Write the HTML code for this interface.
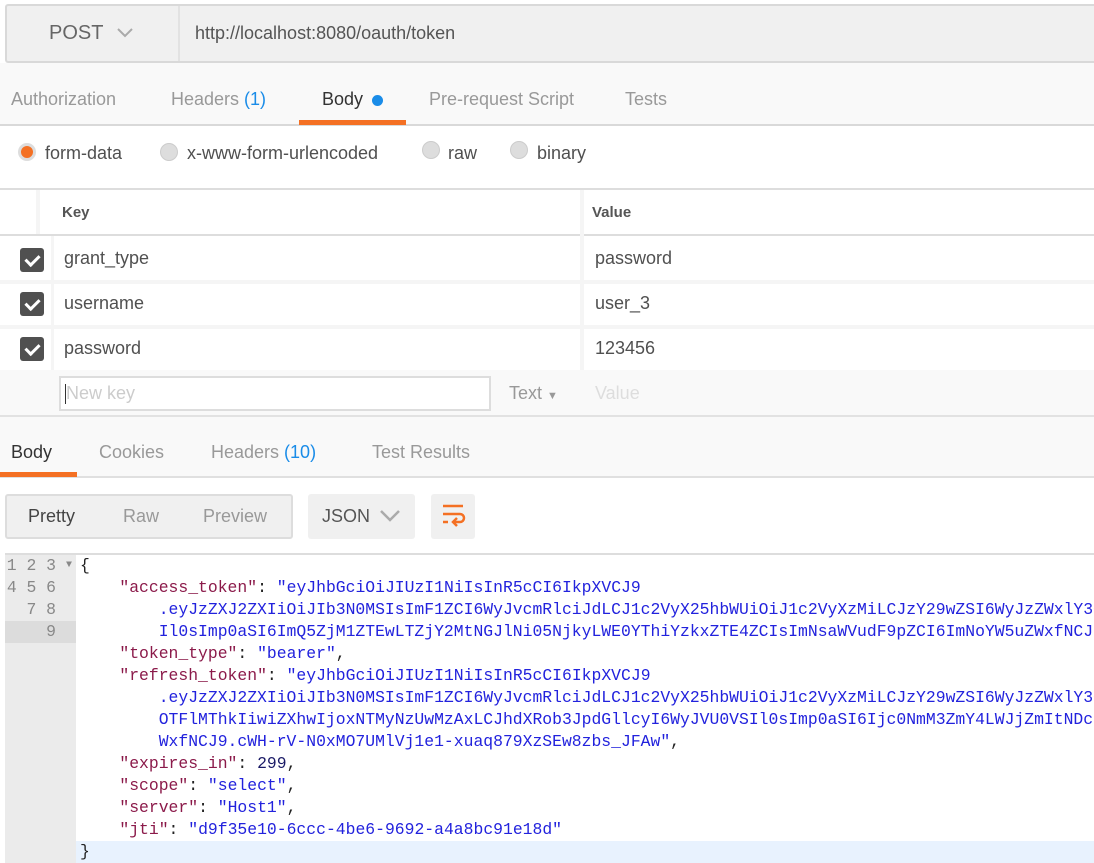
<!DOCTYPE html>
<html><head><meta charset="utf-8"><style>
*{box-sizing:border-box;margin:0;padding:0}
body{width:1094px;height:863px;overflow:hidden;background:#fff;font-family:"Liberation Sans",sans-serif;position:relative;color:#505050}
.a{position:absolute}
.t{font-size:18px;white-space:nowrap}
.g{color:#999}
.b{color:#1a8ce8}
.cb{position:absolute;left:20px;width:24px;height:24px;background:#505050;border-radius:3px}
.cb:after{content:"";position:absolute;left:8px;top:4px;width:6px;height:11px;border:solid #fff;border-width:0 3px 3px 0;transform:rotate(45deg)}
.radio{position:absolute;width:18px;height:18px;border-radius:50%;background:#ddd;border:1px solid #ccc}
.code{position:absolute;left:76px;top:555px;right:0;bottom:0;font-family:"Liberation Mono",monospace;font-size:16.4px;line-height:22px;white-space:pre;overflow:hidden;padding-left:4px}
.ln{position:absolute;left:5px;top:555px;width:71px;bottom:0;background:#ebebeb;font-family:"Liberation Mono",monospace;font-size:16.4px;line-height:22px;color:#888;text-align:right;padding-right:20px}
.k{color:#8b1a4a}.s{color:#2222dd}.n{color:#1a1a66}.p{color:#222}
</style></head><body>
<!-- URL bar -->
<div class="a" style="left:5px;top:4px;right:0;height:59px;background:#f0f0f0;border:2px solid #d9d9d9;border-right:none;border-radius:3px 0 0 3px"></div>
<div class="a" style="left:178px;top:6px;width:2px;height:55px;background:#e2e2e2"></div>
<div class="a t" style="left:49px;top:22px;font-size:20px;color:#666">POST</div>
<svg class="a" style="left:117px;top:27px" width="16" height="12"><path d="M1 2 L8 9 L15 2" stroke="#aaa" stroke-width="2" fill="none"/></svg>
<div class="a t" style="left:195px;top:23px;color:#555">http://localhost:8080/oauth/token</div>
<!-- request tabs -->
<div class="a" style="left:0;top:63px;right:0;height:61px;background:#f9f9f9"></div>
<div class="a" style="left:0;top:124px;right:0;height:2px;background:#d9d9d9"></div>
<div class="a t g" style="left:11px;top:89px">Authorization</div>
<div class="a t g" style="left:171px;top:89px">Headers <span class="b">(1)</span></div>
<div class="a t" style="left:322px;top:89px;color:#333">Body</div>
<div class="a" style="left:372px;top:95px;width:11px;height:11px;border-radius:50%;background:#1a8ce8"></div>
<div class="a" style="left:299px;top:120px;width:107px;height:5px;background:#f47023"></div>
<div class="a t g" style="left:429px;top:89px">Pre-request Script</div>
<div class="a t g" style="left:625px;top:89px">Tests</div>
<!-- radios -->
<div class="radio" style="left:18px;top:143px;background:#f47023;border:3px solid #ddd"></div>
<div class="a t" style="left:45px;top:143px">form-data</div>
<div class="radio" style="left:160px;top:143px"></div>
<div class="a t" style="left:187px;top:143px">x-www-form-urlencoded</div>
<div class="radio" style="left:422px;top:141px"></div>
<div class="a t" style="left:448px;top:143px">raw</div>
<div class="radio" style="left:510px;top:141px"></div>
<div class="a t" style="left:537px;top:143px">binary</div>
<!-- table -->
<div class="a" style="left:0;top:188px;right:0;height:2px;background:#ddd"></div>
<div class="a" style="left:0;top:234px;right:0;height:2px;background:#ddd"></div>
<div class="a" style="left:36px;top:190px;width:4px;height:44px;background:#f5f5f5"></div>
<div class="a" style="left:580px;top:190px;width:4px;height:180px;background:#f5f5f5"></div>
<div class="a" style="left:0;top:280px;right:0;height:4px;background:#f5f5f5"></div>
<div class="a" style="left:0;top:325px;right:0;height:4px;background:#f5f5f5"></div>
<div class="a" style="left:51px;top:236px;width:3px;height:134px;background:#f5f5f5"></div>
<div class="a t" style="left:62px;top:204px;font-size:15px;font-weight:bold;color:#555">Key</div>
<div class="a t" style="left:592px;top:204px;font-size:15px;font-weight:bold;color:#555">Value</div>
<div class="cb" style="top:248px"></div>
<div class="cb" style="top:292px"></div>
<div class="cb" style="top:337px"></div>
<div class="a t" style="left:64px;top:248px">grant_type</div>
<div class="a t" style="left:595px;top:248px">password</div>
<div class="a t" style="left:64px;top:293px">username</div>
<div class="a t" style="left:595px;top:293px">user_3</div>
<div class="a t" style="left:64px;top:338px">password</div>
<div class="a t" style="left:595px;top:338px">123456</div>
<div class="a" style="left:0;top:370px;right:0;height:45px;background:#f9f9f9"></div>
<div class="a" style="left:59px;top:376px;width:432px;height:35px;background:#fff;border:2px solid #ddd"></div>
<div class="a" style="left:65px;top:384px;width:1px;height:20px;background:#333"></div>
<div class="a t" style="left:66px;top:383px;color:#ccc">New key</div>
<div class="a t" style="left:509px;top:383px;color:#999">Text <span style="font-size:11px">▼</span></div>
<div class="a t" style="left:595px;top:383px;color:#ddd">Value</div>
<div class="a" style="left:0;top:415px;right:0;height:2px;background:#e2e2e2"></div>
<!-- response -->
<div class="a" style="left:0;top:417px;right:0;height:60px;background:#f9f9f9"></div>
<div class="a" style="left:0;top:476px;right:0;height:2px;background:#e0e0e0"></div>
<div class="a" style="left:0;top:472px;width:77px;height:5px;background:#f47023"></div>
<div class="a t" style="left:11px;top:442px;color:#333">Body</div>
<div class="a t g" style="left:99px;top:442px">Cookies</div>
<div class="a t g" style="left:211px;top:442px">Headers <span class="b">(10)</span></div>
<div class="a t g" style="left:372px;top:442px">Test Results</div>
<div class="a" style="left:5px;top:494px;width:288px;height:45px;background:#f0f0f0;border:2px solid #ddd;border-radius:3px"></div>
<div class="a t" style="left:28px;top:506px;color:#444">Pretty</div>
<div class="a t g" style="left:123px;top:506px">Raw</div>
<div class="a t g" style="left:203px;top:506px">Preview</div>
<div class="a" style="left:308px;top:494px;width:107px;height:45px;background:#f0f0f0;border-radius:3px"></div>
<div class="a t" style="left:322px;top:506px;color:#555">JSON</div>
<svg class="a" style="left:380px;top:509px" width="20" height="14"><path d="M1 2 L10 11 L19 2" stroke="#aaa" stroke-width="2.5" fill="none"/></svg>
<div class="a" style="left:431px;top:494px;width:44px;height:45px;background:#f0f0f0;border-radius:3px"></div>
<svg class="a" style="left:441px;top:503px" width="26" height="26"><g stroke="#f47023" stroke-width="2.5" fill="none"><path d="M2 3 H22"/><path d="M2 11 H19 a4 4 0 0 1 0 8 H13"/><path d="M2 19 H7"/><path d="M16 15 L12 19 L16 23"/></g></svg>
<!-- editor -->
<div class="a" style="left:5px;top:553px;right:0;height:2px;background:#ddd"></div>
<div class="a" style="left:76px;top:841px;right:0;bottom:0;background:#e8f2fe"></div>
<div class="ln">1<span style="position:absolute;right:4px;font-size:10px">▼</span>
2


3
4



5
6
7
8
<span style="display:block;background:#dcdcdc;margin-right:-20px;padding-right:20px">9</span></div>
<div class="code"><span class="p">{</span>
    <span class="k">"access_token"</span><span class="p">: </span><span class="s">"eyJhbGciOiJIUzI1NiIsInR5cCI6IkpXVCJ9</span>
<span class="s">        .eyJzZXJ2ZXIiOiJIb3N0MSIsImF1ZCI6WyJvcmRlciJdLCJ1c2VyX25hbWUiOiJ1c2VyXzMiLCJzY29wZSI6WyJzZWxlY3QiXSwi</span>
<span class="s">        Il0sImp0aSI6ImQ5ZjM1ZTEwLTZjY2MtNGJlNi05NjkyLWE0YThiYzkxZTE4ZCIsImNsaWVudF9pZCI6ImNoYW5uZWxfNCJ9</span>
    <span class="k">"token_type"</span><span class="p">: </span><span class="s">"bearer"</span><span class="p">,</span>
    <span class="k">"refresh_token"</span><span class="p">: </span><span class="s">"eyJhbGciOiJIUzI1NiIsInR5cCI6IkpXVCJ9</span>
<span class="s">        .eyJzZXJ2ZXIiOiJIb3N0MSIsImF1ZCI6WyJvcmRlciJdLCJ1c2VyX25hbWUiOiJ1c2VyXzMiLCJzY29wZSI6WyJzZWxlY3QiXSwi</span>
<span class="s">        OTFlMThkIiwiZXhwIjoxNTMyNzUwMzAxLCJhdXRob3JpdGllcyI6WyJVU0VSIl0sImp0aSI6Ijc0NmM3ZmY4LWJjZmItNDc</span>
<span class="s">        WxfNCJ9.cWH-rV-N0xMO7UMlVj1e1-xuaq879XzSEw8zbs_JFAw"</span><span class="p">,</span>
    <span class="k">"expires_in"</span><span class="p">: </span><span class="n">299</span><span class="p">,</span>
    <span class="k">"scope"</span><span class="p">: </span><span class="s">"select"</span><span class="p">,</span>
    <span class="k">"server"</span><span class="p">: </span><span class="s">"Host1"</span><span class="p">,</span>
    <span class="k">"jti"</span><span class="p">: </span><span class="s">"d9f35e10-6ccc-4be6-9692-a4a8bc91e18d"</span>
<span class="p">}</span></div>
</body></html>
